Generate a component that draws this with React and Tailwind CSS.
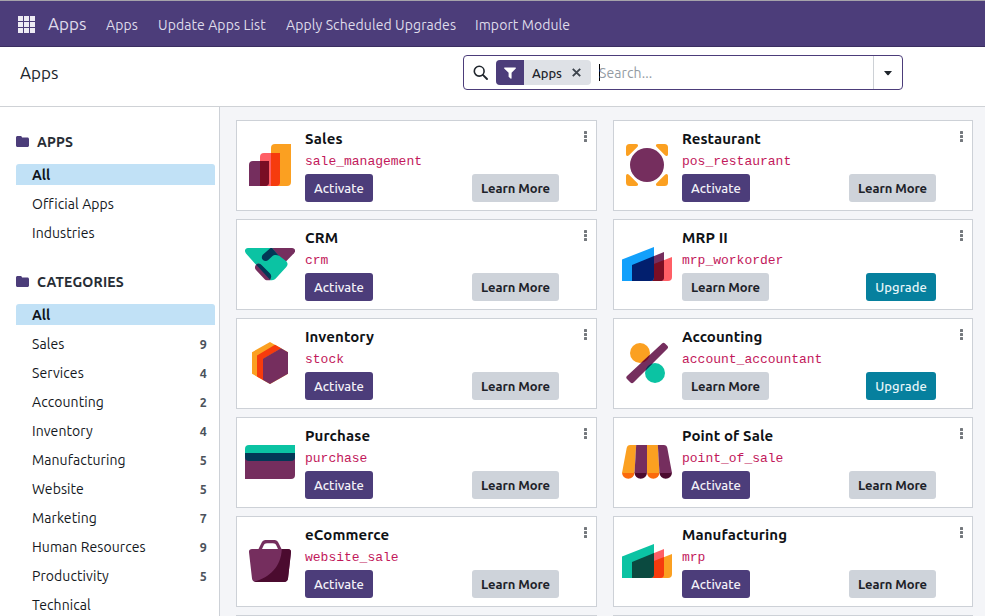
import React from "react";

const PURPLE = "#752e5e";
const YELLOW = "#fba021";
const TEAL = "#0bc3a3";
const NAVY = "#023856";
const PINK = "#ff5f66";
const ORANGE = "#f63b0d";
const MAROON = "#7a0e24";

function IconBase({ children }) {
  return (
    <svg viewBox="0 0 50 50" className="block h-[50px] w-[50px] shrink-0">
      {children}
    </svg>
  );
}

function SalesIcon() {
  return (
    <IconBase>
      <path fill={YELLOW} d="M26 8a4 4 0 0 1 4-4h16v38a4 4 0 0 1-4 4H26z" />
      <path fill={PINK} d="M15 17a4 4 0 0 1 4-4h16v29a4 4 0 0 1-4 4H15z" />
      <path fill={ORANGE} d="M26 13h9v29a4 4 0 0 1-4 4h-5z" />
      <path fill={PURPLE} d="M4 25a4 4 0 0 1 4-4h16v21a4 4 0 0 1-4 4H4z" />
      <path fill={MAROON} d="M15 21h9v21a4 4 0 0 1-4 4h-5z" />
    </IconBase>
  );
}

function CrmIcon() {
  return (
    <IconBase>
      <path fill={PURPLE} d="M26 9h21c3 0 4 3 2 5.200L40.500 23 25 17z" />
      <path fill={TEAL} d="M3 9h24l5.500 6.500 8.800 6.700c1.700 1.800 1.700 4 0 5.800L30.500 39.700c-1.300 1.400-3 1.600-5.500 1.600L1 14.500C-1 12 0 9 3 9z" />
      <path fill={PURPLE} d="M11.200 25.500c1-1.400 3-1.400 4.400 0L25 36c1.200 1.700 1 3.500 0 5.300h-2.500c-1.400 0-2.300-.6-3.300-1.600L11 31c-1.600-1.700-1.300-3.900.2-5.500z" />
      <path fill={NAVY} d="M11.200 25.700c1.500-1.400 3.800-1.300 5.300.2l8.300 8.400c2 2 1.900 4.400 0 6.200z" />
      <path fill={NAVY} d="M25.500 9H27l7 8c-2.300-1.300-5-1.200-7 .5l-3.500 3.300c-1.700 1.700-4 1.700-5.500.2-1.600-1.600-1.600-3.800 0-5.400z" />
    </IconBase>
  );
}

function InventoryIcon() {
  return (
    <IconBase>
      <path fill={YELLOW} d="M25 4l18 10.200v21.600L25 46 7 35.800V14.200z" />
      <path fill={ORANGE} d="M12 17.600L30 6.800l6.200 3.500L18 21v21l-6-3.400z" />
      <path fill={PURPLE} d="M18 20.800l18-10.500 7 3.900v21.600L25 46l-7-4z" />
    </IconBase>
  );
}

function PurchaseIcon() {
  return (
    <IconBase>
      <path fill={PURPLE} d="M0 20h50v18a4 4 0 0 1-4 4H0z" />
      <path fill={TEAL} d="M0 12a4 4 0 0 1 4-4h46v8H0z" />
      <path fill={NAVY} d="M0 16h50v4a4 4 0 0 1-4 4H4a4 4 0 0 1-4-4z" />
    </IconBase>
  );
}

function EcommerceIcon() {
  return (
    <IconBase>
      <path
        fill={PURPLE}
        fillRule="evenodd"
        d="M13.500 13l3.200-6.500C17.500 5 18.700 4 20.500 4h9c1.800 0 3 1 3.800 2.500L36.500 13H43c2 0 3.300 1.300 3 3.300l-3 26.200c-.3 2.200-1.700 3.500-3.800 3.500H10.800c-2.100 0-3.500-1.300-3.800-3.500L4 16.300c-.3-2 1-3.300 3-3.300zM17 13h16l-1.500-3.200C30.700 8 29.700 7.300 28 7.300h-6c-1.700 0-2.700.7-3.500 2.500z"
      />
      <path fill="#4b0b2f" d="M36.800 13H43c2 0 3.300 1.300 3 3.300l-3 26.200c-.3 2.200-1.700 3.500-3.800 3.500H10.800c-.6 0-1.100-.1-1.500-.3C25 41 36 31 36.800 13z" />
    </IconBase>
  );
}

function RestaurantIcon() {
  const corner = "M4 7.500A3.500 3.500 0 0 1 7.500 4H14c2.200 0 2.700 1.700 1.300 3L7 15.300C5.700 16.700 4 16.200 4 14z";
  return (
    <IconBase>
      <path fill={YELLOW} d={corner} />
      <path fill={YELLOW} d={corner} transform="rotate(90 25 25)" />
      <path fill={YELLOW} d={corner} transform="rotate(180 25 25)" />
      <path fill={YELLOW} d={corner} transform="rotate(270 25 25)" />
      <circle cx="25" cy="25" r="17" fill={PURPLE} />
    </IconBase>
  );
}

function FactoryIcon({ front, frontMix, middle, middleMix, back }) {
  return (
    <IconBase>
      <path fill={back} d="M32 25l18-7v20a4 4 0 0 1-4 4H32z" />
      <path fill={middle} d="M10 26l32-13v25a4 4 0 0 1-4 4H10z" />
      <path fill={middleMix} d="M28 26.600L42 21v17a4 4 0 0 1-4 4H28z" />
      <path fill={front} d="M0 20.500L32 8v30a4 4 0 0 1-4 4H0z" />
      <path fill={frontMix} d="M10 26l22-9v21a4 4 0 0 1-4 4H10z" />
    </IconBase>
  );
}

function MrpWorkorderIcon() {
  return <FactoryIcon front="#12a0fb" frontMix="#021f6e" middle={PURPLE} middleMix={MAROON} back={PINK} />;
}

function ManufacturingIcon() {
  return <FactoryIcon front={TEAL} frontMix="#0b4a40" middle={PINK} middleMix={ORANGE} back={YELLOW} />;
}

function AccountingIcon() {
  const bar = "M40 5.500c1-1 2-1 3 0l2.300 2.300c1 1 1 2 0 3L11.500 44.500c-1 1-2 1-3 0L5 41c-1-1-1-2 0-3z";
  return (
    <IconBase>
      <clipPath id="accounting-bar">
        <path d={bar} />
      </clipPath>
      <circle cx="18" cy="15" r="10" fill={YELLOW} />
      <circle cx="33" cy="35" r="10" fill={TEAL} />
      <path fill={PURPLE} d={bar} />
      <g clipPath="url(#accounting-bar)">
        <circle cx="18" cy="15" r="10" fill={MAROON} />
        <circle cx="33" cy="35" r="10" fill={NAVY} />
      </g>
    </IconBase>
  );
}

function PointOfSaleIcon() {
  return (
    <IconBase>
      <path fill="#fb6a0c" d="M0 35.500h12.500a6.250 6.250 0 0 1-12.500 0zM25 35.500h12.500a6.250 6.250 0 0 1-12.500 0z" />
      <path fill="#4b0b2f" d="M12.500 35.500H25a6.250 6.250 0 0 1-12.500 0zM37.500 35.500H50a6.250 6.250 0 0 1-12.500 0z" />
      <path fill={YELLOW} d="M4.700 11c.4-2 1.600-3 3.500-3h6l-1.700 28H0z" />
      <path fill={PURPLE} d="M14.200 8H25v28H12.500z" />
      <path fill={YELLOW} d="M25 8h10.800l1.700 28H25z" />
      <path fill={PURPLE} d="M35.800 8h6c1.900 0 3.100 1 3.500 3L50 36H37.500z" />
    </IconBase>
  );
}

const apps = [
  { name: "Sales", code: "sale_management", Icon: SalesIcon },
  { name: "Restaurant", code: "pos_restaurant", Icon: RestaurantIcon },
  { name: "CRM", code: "crm", Icon: CrmIcon },
  { name: "MRP II", code: "mrp_workorder", Icon: MrpWorkorderIcon, upgrade: true },
  { name: "Inventory", code: "stock", Icon: InventoryIcon },
  { name: "Accounting", code: "account_accountant", Icon: AccountingIcon, upgrade: true },
  { name: "Purchase", code: "purchase", Icon: PurchaseIcon },
  { name: "Point of Sale", code: "point_of_sale", Icon: PointOfSaleIcon },
  { name: "eCommerce", code: "website_sale", Icon: EcommerceIcon },
  { name: "Manufacturing", code: "mrp", Icon: ManufacturingIcon },
];

const categories = [
  ["Sales", 9],
  ["Services", 4],
  ["Accounting", 2],
  ["Inventory", 4],
  ["Manufacturing", 5],
  ["Website", 5],
  ["Marketing", 7],
  ["Human Resources", 9],
  ["Productivity", 5],
  ["Technical", null],
];

function ActivateButton() {
  return (
    <button className="h-7 w-[68px] rounded-[3px] bg-[#4c3d7a] text-[13px] font-medium leading-7 tracking-[0.05px] text-[#f3f1f8]">
      Activate
    </button>
  );
}

function LearnMoreButton() {
  return (
    <button className="h-7 w-[87px] whitespace-nowrap rounded-[3px] bg-[#ced3da] text-[13px] font-semibold leading-7 tracking-[-0.1px] text-[#1d2229]">
      Learn More
    </button>
  );
}

function UpgradeButton() {
  return (
    <button className="h-7 w-[70px] rounded-[3px] bg-[#06809e] text-[13px] font-medium leading-7 tracking-[0.05px] text-[#e8f6f9]">
      Upgrade
    </button>
  );
}

function AppCard({ name, code, Icon, upgrade }) {
  return (
    <article className="flex h-[91px] border border-[#cdd1d7] bg-white pl-2">
      <div className="pt-[19px]">
        <Icon />
      </div>
      <div className="ml-[10px] w-[254px] pt-2">
        <h3 className="h-5 text-[15px] font-semibold leading-5 tracking-[0.1px] text-[#0f1216]">{name}</h3>
        <code className="block h-[25px] pt-[3px] font-['Liberation_Mono',monospace] text-[13px] leading-5 text-[#c2185b]">{code}</code>
        <div className="flex justify-between">
          {upgrade ? <LearnMoreButton /> : <ActivateButton />}
          {upgrade ? <UpgradeButton /> : <LearnMoreButton />}
        </div>
      </div>
      <div className="flex flex-1 flex-col items-end gap-px pr-[9px] pt-[10px]">
        <span className="h-[3px] w-[3px] rounded-[0.5px] bg-[#74787d]" />
        <span className="h-[3px] w-[3px] rounded-[0.5px] bg-[#74787d]" />
        <span className="h-[3px] w-[3px] rounded-[0.5px] bg-[#74787d]" />
      </div>
    </article>
  );
}

function SectionHeader({ children }) {
  return (
    <h2 className="flex h-5 items-center gap-2 text-[14px] font-bold leading-5 tracking-[0.18px] text-[#272d35]">
      <svg viewBox="0 0 13 11" className="-mt-px h-[11px] w-[13px]">
        <path fill="#4c3d7a" d="M0 1.500C0 .7.7 0 1.500 0h3C5.300 0 6 .7 6 1.500h5.500c.8 0 1.500.7 1.500 1.500v6.500c0 .8-.7 1.500-1.500 1.500h-10C.7 11 0 10.300 0 9.500z" />
      </svg>
      {children}
    </h2>
  );
}

function SelectedRow() {
  return (
    <li className="h-[21px] rounded-t-[3px] bg-[#c1e1f6] pl-4 text-[14px] font-semibold leading-[23px] text-[#10151b]">All</li>
  );
}

function Row({ label, count }) {
  return (
    <li className="flex h-[21px] items-center justify-between pl-4 pr-2 pt-[2px] text-[14px] leading-[21px] tracking-[0.08px] text-[#14181d]">
      <span>{label}</span>
      {count != null && <span className="text-[12.5px] font-semibold text-[#4b525b]">{count}</span>}
    </li>
  );
}

export default function App() {
  return (
    <div className="flex h-[616px] w-[985px] flex-col overflow-hidden bg-white font-['Ubuntu','Noto_Sans',sans-serif]">
      <header className="flex h-[47px] shrink-0 items-center border-b border-t border-b-[#3a2e60] border-t-[#a5a3aa] bg-[#4c3d7a] pl-[18px] text-[14px] text-[#dfdbea]">
        <div className="mt-px grid grid-cols-3 gap-px">
          {Array.from({ length: 9 }, (_, i) => (
            <span key={i} className="h-[5px] w-[5px] bg-[#eeecf4]" />
          ))}
        </div>
        <span className="ml-[13px] w-[58px] text-[17px]">Apps</span>
        <nav className="flex whitespace-nowrap pt-[3px] tracking-[0.09px]">
          <span className="w-[52px]">Apps</span>
          <span className="w-32">Update Apps List</span>
          <span className="w-[189px]">Apply Scheduled Upgrades</span>
          <span>Import Module</span>
        </nav>
      </header>

      <div className="flex h-[60px] shrink-0 border-b border-[#cfd2d6] pl-5 pt-2">
        <h1 className="w-[443px] text-[17px] leading-9 text-[#20262d]">Apps</h1>
        <div className="flex h-[35px] w-[440px] items-center rounded border border-[#4c3d7a]">
          <svg viewBox="0 0 15 15" className="ml-[9px] h-[15px] w-[15px]" fill="none" stroke="#20262d">
            <circle cx="6.200" cy="6.200" r="4.900" strokeWidth="1.600" />
            <path d="M9.900 9.900l4.100 4.100" strokeWidth="1.900" strokeLinecap="round" />
          </svg>
          <div className="ml-2 flex h-[25px] w-[95px] overflow-hidden rounded-[4px] bg-[#dee1e6]">
            <div className="flex w-7 items-center justify-center bg-[#4c3d7a]">
              <svg viewBox="0 0 12 12" className="h-3 w-3">
                <path fill="#fff" d="M.6.500h10.800c.5 0 .7.500.4.900L7.600 5.800v5.500c0 .4-.5.700-.8.400L4.600 9.800V5.800L.2 1.400C-.1 1 .1.500.6.500z" />
              </svg>
            </div>
            <span className="w-12 pl-2 text-[13px] font-medium leading-[26px] text-[#1f252c]">Apps</span>
            <svg viewBox="0 0 9 9" className="mt-2 h-[9px] w-[9px]" stroke="#3d444d" strokeWidth="1.900">
              <path d="M.8.800l7.400 7.400M8.200.800L.8 8.200" />
            </svg>
          </div>
          <span className="ml-2 h-[17px] w-px bg-black" />
          <span className="-ml-px flex-1 pt-px text-[14px] tracking-[0.1px] text-[#939ba3]">Search...</span>
          <div className="flex h-full w-[29px] items-center justify-center border-l border-[#cdd1d6]">
            <svg viewBox="0 0 8 5" className="mt-[2px] h-[5px] w-2">
              <path fill="#20262d" d="M0 0h8L4.700 3.900c-.4.500-1 .5-1.400 0z" />
            </svg>
          </div>
        </div>
      </div>

      <div className="flex min-h-0 flex-1">
        <aside className="w-[220px] shrink-0 overflow-hidden border-r border-[#cdd1d7] pl-4 pr-1 pt-[25px]">
          <SectionHeader>APPS</SectionHeader>
          <ul className="mb-[29px] mt-3 flex flex-col gap-2">
            <SelectedRow />
            <Row label="Official Apps" />
            <Row label="Industries" />
          </ul>
          <SectionHeader>CATEGORIES</SectionHeader>
          <ul className="mt-3 flex flex-col gap-2">
            <SelectedRow />
            {categories.map(([label, count]) => (
              <Row key={label} label={label} count={count} />
            ))}
          </ul>
        </aside>

        <main className="flex-1 overflow-hidden bg-[#f4f5f8] pl-4 pr-3 pt-[13px]">
          <div className="grid grid-cols-[361px_360px] gap-x-4 gap-y-2">
            {apps.map((app) => (
              <AppCard key={app.code} {...app} />
            ))}
            <div className="h-[91px] border border-[#cdd1d7] bg-white" />
            <div className="h-[91px] border border-[#cdd1d7] bg-white" />
          </div>
        </main>
      </div>
    </div>
  );
}
